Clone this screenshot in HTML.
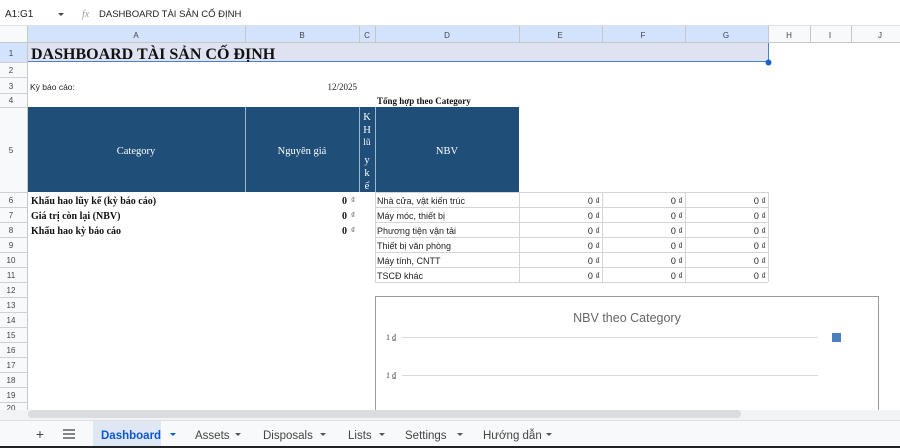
<!DOCTYPE html>
<html><head><meta charset="utf-8"><style>
html,body{margin:0;padding:0;background:#fff;width:900px;height:448px;overflow:hidden}
svg text{font-family:"Liberation Sans",sans-serif}
svg .s, svg .s text{font-family:"Liberation Serif",serif}
</style></head><body>
<svg width="900" height="448" xmlns="http://www.w3.org/2000/svg">
<rect x="0" y="0" width="900" height="26" fill="#fff"/>
<text x="5" y="17" font-size="10" fill="#202124">A1:G1</text>
<path d="M58 13l3 3 3-3z" fill="#444"/>
<text x="82" y="17" font-size="10" font-style="italic" fill="#9aa0a6" class="s">fx</text>
<text x="99" y="17" font-size="9.5" fill="#202124">DASHBOARD TÀI SẢN CỐ ĐỊNH</text>
<line x1="0" y1="25.5" x2="900" y2="25.5" stroke="#e0e0e0"/>
<rect x="0" y="26" width="900" height="17" fill="#f8f9fa"/>
<rect x="28" y="26" width="740" height="17" fill="#d3e3fd"/>
<rect x="0" y="43" width="28" height="19" fill="#d3e3fd"/>
<rect x="0" y="62" width="28" height="348" fill="#f8f9fa"/>
<g font-size="8" fill="#444" text-anchor="middle">
<text x="136" y="38">A</text><text x="302" y="38">B</text><text x="367" y="38">C</text><text x="447" y="38">D</text><text x="560" y="38">E</text><text x="643" y="38">F</text><text x="726" y="38">G</text><text x="789" y="38">H</text><text x="830" y="38">I</text><text x="880" y="38">J</text>
<text x="11" y="56">1</text><text x="11" y="73">2</text><text x="11" y="89">3</text><text x="11" y="103">4</text><text x="11" y="153">5</text>
<text x="11" y="203">6</text><text x="11" y="218">7</text><text x="11" y="233">8</text><text x="11" y="248">9</text><text x="11" y="263">10</text><text x="11" y="278">11</text><text x="11" y="293">12</text><text x="11" y="308">13</text><text x="11" y="323">14</text><text x="11" y="338">15</text><text x="11" y="353">16</text><text x="11" y="368">17</text><text x="11" y="383">18</text><text x="11" y="398">19</text><text x="11" y="411">20</text>
</g>
<g stroke="#c7c7c7" stroke-width="1">
<line x1="27.5" y1="26" x2="27.5" y2="410"/>
<line x1="0" y1="42.5" x2="900" y2="42.5"/>
<line x1="245.5" y1="26" x2="245.5" y2="43"/><line x1="359.5" y1="26" x2="359.5" y2="43"/><line x1="375.5" y1="26" x2="375.5" y2="43"/><line x1="519.5" y1="26" x2="519.5" y2="43"/><line x1="602.5" y1="26" x2="602.5" y2="43"/><line x1="685.5" y1="26" x2="685.5" y2="43"/><line x1="768.5" y1="26" x2="768.5" y2="43"/><line x1="810.5" y1="26" x2="810.5" y2="43"/><line x1="851.5" y1="26" x2="851.5" y2="43"/>
</g>
<g stroke="#d0d0d0">
<line x1="0" y1="62.5" x2="28" y2="62.5"/><line x1="0" y1="77.5" x2="28" y2="77.5"/><line x1="0" y1="93.5" x2="28" y2="93.5"/><line x1="0" y1="107.5" x2="28" y2="107.5"/><line x1="0" y1="192.5" x2="28" y2="192.5"/>
<line x1="0" y1="207.5" x2="28" y2="207.5"/><line x1="0" y1="222.5" x2="28" y2="222.5"/><line x1="0" y1="237.5" x2="28" y2="237.5"/><line x1="0" y1="252.5" x2="28" y2="252.5"/><line x1="0" y1="267.5" x2="28" y2="267.5"/><line x1="0" y1="282.5" x2="28" y2="282.5"/><line x1="0" y1="297.5" x2="28" y2="297.5"/><line x1="0" y1="312.5" x2="28" y2="312.5"/><line x1="0" y1="327.5" x2="28" y2="327.5"/><line x1="0" y1="342.5" x2="28" y2="342.5"/><line x1="0" y1="357.5" x2="28" y2="357.5"/><line x1="0" y1="372.5" x2="28" y2="372.5"/><line x1="0" y1="387.5" x2="28" y2="387.5"/><line x1="0" y1="402.5" x2="28" y2="402.5"/>
</g>
<rect x="28" y="43" width="740" height="19" fill="#dfe3f1"/>
<path d="M28 61.5H768.5V43" fill="none" stroke="#4a7fd6"/>
<circle cx="768.5" cy="62.5" r="3" fill="#1a5fd0"/>
<text x="31" y="59" class="s" font-size="16" font-weight="bold" fill="#111">DASHBOARD TÀI SẢN CỐ ĐỊNH</text>
<text x="30" y="90" font-size="8.5" fill="#222">Kỳ báo cáo:</text>
<text x="357" y="90" class="s" font-size="9" fill="#222" text-anchor="end">12/2025</text>
<text x="377" y="104" class="s" font-size="9" font-weight="bold" fill="#111">Tổng hợp theo Category</text>
<rect x="28" y="107" width="491" height="85" fill="#1f4e79"/>
<g stroke="#9fb6cf"><line x1="245.5" y1="107" x2="245.5" y2="192"/><line x1="359.5" y1="107" x2="359.5" y2="192"/><line x1="375.5" y1="107" x2="375.5" y2="192"/></g>
<g class="s" fill="#fff" font-size="10.5" text-anchor="middle">
<text x="136" y="154">Category</text><text x="302" y="154">Nguyên giá</text><text x="447" y="154">NBV</text>
<text x="367" y="120">K</text><text x="367" y="133">H</text><text x="367" y="145" font-size="9.5">lũ</text><text x="367" y="163">y</text><text x="367" y="176">k</text><text x="367" y="189">ế</text>
</g>
<g class="s" font-size="10" font-weight="bold" fill="#111">
<text x="31" y="204">Khấu hao lũy kế (kỳ báo cáo)</text>
<text x="31" y="219">Giá trị còn lại (NBV)</text>
<text x="31" y="234">Khấu hao kỳ báo cáo</text>
<text x="347" y="204" text-anchor="end">0</text><text x="347" y="219" text-anchor="end">0</text><text x="347" y="234" text-anchor="end">0</text>
</g>
<g font-size="8" fill="#555"><text x="351" y="203">₫</text><text x="351" y="218">₫</text><text x="351" y="233">₫</text></g>
<g stroke="#d4d4d4">
<line x1="375" y1="192.5" x2="768" y2="192.5"/><line x1="375" y1="207.5" x2="768" y2="207.5"/><line x1="375" y1="222.5" x2="768" y2="222.5"/><line x1="375" y1="237.5" x2="768" y2="237.5"/><line x1="375" y1="252.5" x2="768" y2="252.5"/><line x1="375" y1="267.5" x2="768" y2="267.5"/><line x1="375" y1="282.5" x2="768" y2="282.5"/>
<line x1="375.5" y1="192" x2="375.5" y2="282"/><line x1="519.5" y1="192" x2="519.5" y2="282"/><line x1="602.5" y1="192" x2="602.5" y2="282"/><line x1="685.5" y1="192" x2="685.5" y2="282"/><line x1="768.5" y1="192" x2="768.5" y2="282"/>
</g>
<g font-size="9" fill="#222">
<text x="377" y="204">Nhà cửa, vật kiến trúc</text><text x="377" y="219">Máy móc, thiết bị</text><text x="377" y="234">Phương tiện vận tải</text><text x="377" y="249">Thiết bị văn phòng</text><text x="377" y="264">Máy tính, CNTT</text><text x="377" y="279">TSCĐ khác</text>
</g>
<g font-size="9" fill="#222" text-anchor="end">
<text x="600" y="204">0 ₫</text><text x="683" y="204">0 ₫</text><text x="766" y="204">0 ₫</text>
<text x="600" y="219">0 ₫</text><text x="683" y="219">0 ₫</text><text x="766" y="219">0 ₫</text>
<text x="600" y="234">0 ₫</text><text x="683" y="234">0 ₫</text><text x="766" y="234">0 ₫</text>
<text x="600" y="249">0 ₫</text><text x="683" y="249">0 ₫</text><text x="766" y="249">0 ₫</text>
<text x="600" y="264">0 ₫</text><text x="683" y="264">0 ₫</text><text x="766" y="264">0 ₫</text>
<text x="600" y="279">0 ₫</text><text x="683" y="279">0 ₫</text><text x="766" y="279">0 ₫</text>
</g>
<rect x="375.5" y="296.5" width="503" height="120" fill="#fff" stroke="#9a9a9a"/>
<text x="627" y="322" font-size="12.5" fill="#666" text-anchor="middle">NBV theo Category</text>
<line x1="402" y1="337.5" x2="818" y2="337.5" stroke="#d9d9d9"/>
<line x1="402" y1="375.5" x2="818" y2="375.5" stroke="#d9d9d9"/>
<text x="386" y="340" class="s" font-size="8" fill="#444">1 ₫</text>
<text x="386" y="378" class="s" font-size="8" fill="#444">1 ₫</text>
<rect x="832" y="333" width="9" height="9" fill="#4a7fc1"/>
<rect x="0" y="410" width="900" height="10" fill="#f1f3f4"/>
<rect x="28" y="410" width="713" height="8" rx="4" fill="#dadce0"/>
<rect x="0" y="420" width="900" height="26" fill="#f8f9fa"/>
<line x1="0" y1="420.5" x2="900" y2="420.5" stroke="#e0e0e0"/>
<rect x="0" y="446" width="900" height="2" fill="#202124"/>
<text x="40" y="439" font-size="14" fill="#444" text-anchor="middle">+</text>
<g stroke="#444" stroke-width="1.3"><line x1="63" y1="430" x2="75" y2="430"/><line x1="63" y1="434" x2="75" y2="434"/><line x1="63" y1="438" x2="75" y2="438"/></g>
<rect x="93" y="421" width="68" height="25" fill="#dfe7f5"/>
<g font-size="11.5" fill="#444">
<text x="101" y="439" fill="#0b57d0" font-weight="bold">Dashboard</text>
<text x="195" y="439">Assets</text>
<text x="263" y="439">Disposals</text>
<text x="348" y="439">Lists</text>
<text x="405" y="439">Settings</text>
<text x="483" y="439">Hướng dẫn</text>
</g>
<g fill="#555"><path d="M170 433l3 3 3-3z" fill="#0b57d0"/><path d="M235 433l3 3 3-3z"/><path d="M320 433l3 3 3-3z"/><path d="M379 433l3 3 3-3z"/><path d="M457 433l3 3 3-3z"/><path d="M546 433l3 3 3-3z"/></g>
</svg>
</body></html>
